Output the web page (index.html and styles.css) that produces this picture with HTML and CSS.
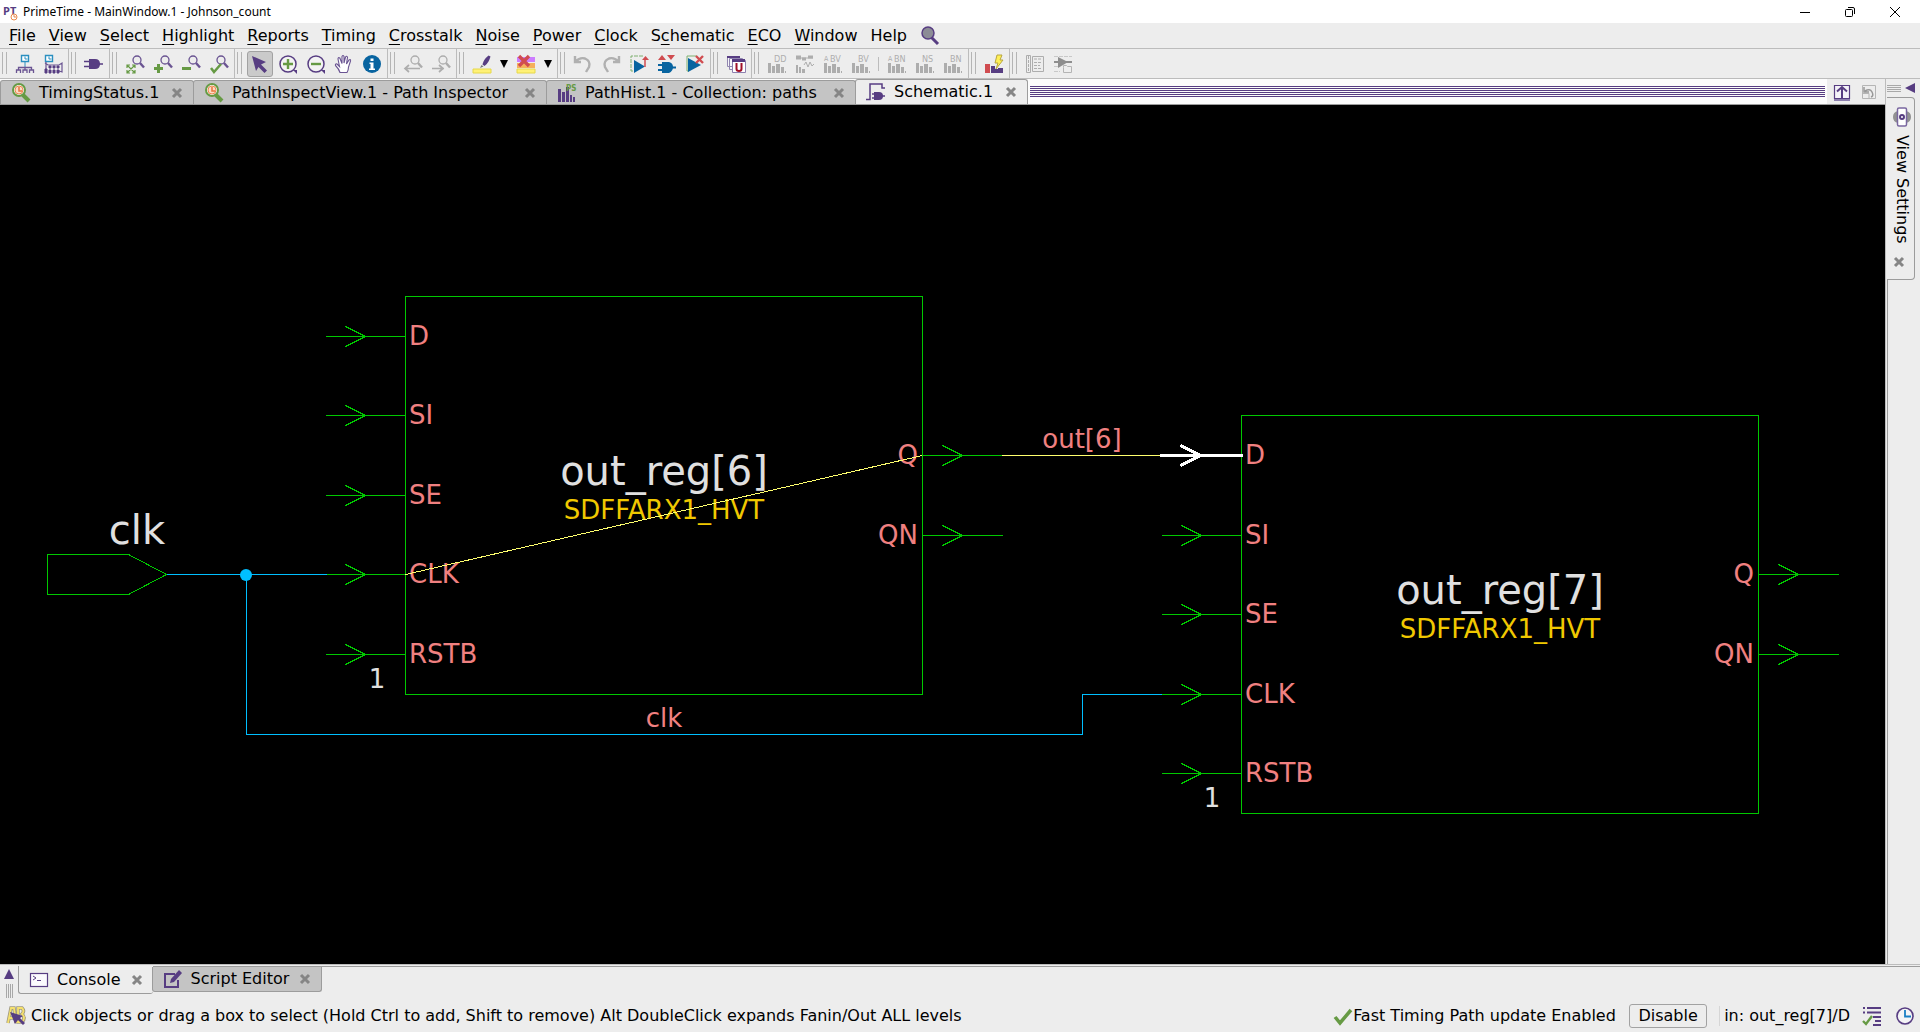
FILE: index.html
```html
<!DOCTYPE html>
<html lang="en">
<head>
<meta charset="utf-8">
<title>PrimeTime - MainWindow.1 - Johnson_count</title>
<link rel="stylesheet" href="styles.css">
</head>
<body>
<svg class="defs" aria-hidden="true">
  <defs>
    <symbol id="close" viewBox="0 0 12 12"><path d="M2 2l8 8M10 2l-8 8" stroke="#858585" stroke-width="3"/></symbol>
    <symbol id="lens" viewBox="0 0 20 20"><circle cx="12" cy="6" r="4" fill="none" stroke="currentColor" stroke-width="1.3"/><path d="M15 9l4 4.500" stroke="currentColor" stroke-width="2.400"/></symbol>
    <symbol id="bars" viewBox="0 0 20 20"><path d="M1 9h3v10H1zM5 12h3v7H5zM9 10h4v9H9zM14 13h3v6h-3zM18 17h1v2h-1z" fill="currentColor"/></symbol>
    <symbol id="timing" viewBox="0 0 20 20"><path d="M12 12l6 6" stroke="#669a44" stroke-width="4"/><circle cx="8" cy="7" r="6" fill="#fdfdfd" stroke="#669a44" stroke-width="2"/><circle cx="8" cy="7" r="4" fill="#fbdcc6" stroke="#ee8650" stroke-width="1"/><path d="M8 4v4h3" fill="none" stroke="#e8743c" stroke-width="1.500"/></symbol>
  </defs>
</svg>

<header class="titlebar">
  <svg class="logo" viewBox="0 0 16 16"><text x="0" y="11" class="logo-text">PT</text><circle cx="11" cy="13" r="3" fill="#fff" stroke="#e98a4e"/><path d="M11 11v2h2" fill="none" stroke="#e98a4e"/></svg>
  <h1>PrimeTime - MainWindow.1 - Johnson_count</h1>
  <div class="window-buttons">
    <button aria-label="Minimize"><svg viewBox="0 0 12 12"><path d="M1 6.500h10" stroke="#000"/></svg></button>
    <button aria-label="Restore"><svg viewBox="0 0 12 12"><rect x="1.500" y="3.500" width="7" height="7" rx="1" fill="none" stroke="#000"/><path d="M4 1.500h5q1.500 0 1.500 1.500v5" fill="none" stroke="#000"/></svg></button>
    <button aria-label="Close"><svg viewBox="0 0 12 12"><path d="M1 1l10 10M11 1L1 11" stroke="#000"/></svg></button>
  </div>
</header>

<nav class="menubar">
  <button><u>F</u>ile</button><button><u>V</u>iew</button><button><u>S</u>elect</button><button><u>H</u>ighlight</button><button><u>R</u>eports</button><button><u>T</u>iming</button><button><u>C</u>rosstalk</button><button><u>N</u>oise</button><button><u>P</u>ower</button><button><u>C</u>lock</button><button>S<u>c</u>hematic</button><button><u>E</u>CO</button><button><u>W</u>indow</button><button>Help</button>
  <button class="search" aria-label="Search"><svg class="icon" viewBox="0 0 20 20"><path d="M11 11l7 7" stroke="#573d82" stroke-width="3"/><circle cx="8" cy="7" r="6" fill="#8c8c96" stroke="#573d82" stroke-width="1.500"/></svg></button>
</nav>

<div class="toolbar">
  <div class="group">
    <button aria-label="Clock hierarchy"><svg class="icon" viewBox="0 0 20 20"><path d="M6.500 1.500h7v6h-7z" fill="#fff" stroke="#2a8fc0" stroke-width="1.400"/><path d="M10 2.500v2.500h2.500" fill="none" stroke="#2a8fc0"/><path d="M10 8v6" stroke="#2a8fc0"/><path d="M3.500 16v-2.500h13V16M10 13v3M1.500 19v-3h4v3M8 19v-3h4v3M14.500 19v-3h4v3" fill="none" stroke="#6a5492" stroke-width="1.300"/></svg></button>
    <button aria-label="Clock matrix"><svg class="icon" viewBox="0 0 20 20"><path d="M2.500 1.500h7v6h-7z" fill="#fff" stroke="#2a8fc0" stroke-width="1.400"/><path d="M6 2.500v2.500h2.500" fill="none" stroke="#2a8fc0"/><path d="M3 8v11M2 9l3 2h11l3-2v9l-3-1" fill="none" stroke="#6a5492" stroke-width="1.200"/><path d="M6 12h2v2H6zM10 12h2v2h-2zM14 12h2v2h-2zM6 16h2v3H6zM10 16h2v3h-2zM14 16h2v3h-2zM2 15h2v4H2z" fill="#573d82" stroke="#573d82"/></svg></button>
  </div>
  <div class="group">
    <button aria-label="Gate"><svg class="icon" viewBox="0 0 20 20"><path d="M5 5h6q5 0 5 5t-5 5H5z" fill="#573d82"/><path d="M0 7.500h6M0 12.500h6M15 10h4" stroke="#573d82" stroke-width="1.500"/></svg></button>
  </div>
  <div class="group purple">
    <button aria-label="Zoom fit"><svg class="icon" viewBox="0 0 20 20"><use href="#lens"/><path d="M2 14v-3h3M7 11h3v3M2 16v3h3M7 19h3v-3M2.500 11.500l7 7M9.500 11.500l-7 7" fill="none" stroke="#669a44" stroke-width="1.200"/></svg></button>
    <button aria-label="Zoom in"><svg class="icon" viewBox="0 0 20 20"><use href="#lens"/><path d="M1 14.500h9M5.500 10v9" stroke="#669a44" stroke-width="3"/></svg></button>
    <button aria-label="Zoom out"><svg class="icon" viewBox="0 0 20 20"><use href="#lens"/><path d="M1 14.500h9" stroke="#669a44" stroke-width="3"/></svg></button>
    <button aria-label="Zoom selection"><svg class="icon" viewBox="0 0 20 20"><use href="#lens"/><path d="M2 14l3 4l7-8" fill="none" stroke="#669a44" stroke-width="2.500"/></svg></button>
  </div>
  <div class="group purple">
    <button class="pressed" aria-label="Select tool"><svg class="icon" viewBox="0 0 20 20"><path d="M2 2l14 6l-5 2.500l6 6l-2.500 2.500l-6-6l-2.500 4z" fill="#573d82"/></svg></button>
    <button aria-label="Zoom in tool"><svg class="icon" viewBox="0 0 20 20"><circle cx="10" cy="10" r="8" fill="#f3f3f3" stroke="#573d82" stroke-width="1.500"/><path d="M15 16l4 4v-4z" fill="#573d82"/><path d="M5 10h10M10 5v10" stroke="#669a44" stroke-width="2.400"/></svg></button>
    <button aria-label="Zoom out tool"><svg class="icon" viewBox="0 0 20 20"><circle cx="10" cy="10" r="8" fill="#f3f3f3" stroke="#573d82" stroke-width="1.500"/><path d="M15 16l4 4v-4z" fill="#573d82"/><path d="M5 10h10" stroke="#669a44" stroke-width="2.400"/></svg></button>
    <button aria-label="Pan"><svg class="icon" viewBox="0 0 20 20"><path d="M6 18.500Q5 15 1.500 11.500Q1 9.500 3 10l2.500 2.500L4 5q0-2 1.800-1L8 9.500V2.500q1-2 2 0V9l1.500-6q1.300-1.500 2 .3L12.500 10l2.500-4q2-1 1.500 1L14.500 13q0 3-1.500 5.500z" fill="#fff" stroke="#6a5492" stroke-width="1.100"/></svg></button>
    <button aria-label="Info"><svg class="icon" viewBox="0 0 20 20"><circle cx="10" cy="10" r="9" fill="#0864a0"/><path d="M8.500 4.500h3v2.500h-3zM7.500 8.500h4v6h1.500v1.500H7v-1.500h1.500V10h-1z" fill="#fff"/></svg></button>
  </div>
  <div class="group muted">
    <button disabled aria-label="Zoom back"><svg class="icon" viewBox="0 0 20 20"><use href="#lens"/><path d="M17 14.500H2M6 11l-4 3.500L6 18" fill="none" stroke="currentColor" stroke-width="1.700"/></svg></button>
    <button disabled aria-label="Zoom forward"><svg class="icon" viewBox="0 0 20 20"><use href="#lens"/><path d="M1 14.500h12M8 11l4 3.500L8 18" fill="none" stroke="currentColor" stroke-width="1.700"/></svg></button>
  </div>
  <div class="group">
    <button aria-label="Highlight"><svg class="icon" viewBox="0 0 20 20"><path d="M1 15h18v4H1z" fill="#fff176" stroke="#e6d84a"/><path d="M16.500 1.500l2 1q-2 7-6 9.500l-2-1.500q1-5 6-9z" fill="#573d82"/><path d="M9.500 11l2 1.500l-3.500 1.500z" fill="#777"/></svg></button>
    <button class="caret" aria-label="Highlight colors"><svg viewBox="0 0 10 8"><path d="M1 0h8L5 8z"/></svg></button>
    <button aria-label="Clear highlight"><svg class="icon" viewBox="0 0 20 20"><path d="M1 3h18v5H1z" fill="#cc7dff"/><path d="M1 9h18v5H1z" fill="#f5b05c"/><path d="M1 15h18v4H1z" fill="#fff176" stroke="#e6d84a"/><path d="M3 2l10 10M13 2L3 12" stroke="#d04c50" stroke-width="3.400"/></svg></button>
    <button class="caret" aria-label="Clear options"><svg viewBox="0 0 10 8"><path d="M1 0h8L5 8z"/></svg></button>
  </div>
  <div class="group">
    <button disabled aria-label="Undo"><svg class="icon" viewBox="0 0 20 20"><path d="M2 2v6h6M2.500 7.500Q7 3 12 4.500Q18 7 16 13L13 18" fill="none" stroke="#b0b0b0" stroke-width="2.400"/></svg></button>
    <button disabled aria-label="Redo"><svg class="icon" viewBox="0 0 20 20"><path d="M18 2v6h-6M17.500 7.500Q13 3 8 4.500Q2 7 4 13L7 18" fill="none" stroke="#b0b0b0" stroke-width="2.400"/></svg></button>
    <button aria-label="Expand upward"><svg class="icon" viewBox="0 0 20 20"><path d="M4 17H2V2h12" fill="none" stroke="#7fb070" stroke-dasharray="4 1"/><path d="M5 6l11 6.500L5 19z" fill="#0864a0"/><path d="M16 13V5" stroke="#d04c50" stroke-width="1.500"/><path d="M13 6l3.500-4L20 6z" fill="#d04c50"/></svg></button>
    <button aria-label="Add to schematic"><svg class="icon" viewBox="0 0 20 20"><path d="M5 8h7q4 1 4 5t-4 6H5z" fill="#0864a0"/><path d="M1 11h5M1 16h5M15 13.500h4" stroke="#0864a0" stroke-width="2"/><path d="M1 6l4-5l4 5zM10 1h8l-4 5z" fill="#d04c50"/></svg></button>
    <button aria-label="Remove from schematic"><svg class="icon" viewBox="0 0 20 20"><path d="M4 17H2V2h10" fill="none" stroke="#7fb070"/><path d="M3 4l13 7L3 18z" fill="#0864a0"/><path d="M11 2l7 7M18 2l-7 7" stroke="#d04c50" stroke-width="2.400"/></svg></button>
  </div>
  <div class="group">
    <button aria-label="Cell tables"><svg class="icon" viewBox="0 0 20 20"><path d="M1.500 2.500h12v10h-12zM3.500 4.500h13v11h-13z" fill="#f7f7fa" stroke="#9186b0"/><path d="M1 2h13v2H1z" fill="#573d82"/><path d="M6.500 6.500h13v12h-13z" fill="#fff" stroke="#8c7fae"/><path d="M6 5h13v3H6z" fill="#573d82"/><path d="M10.500 9v6q0 2 2.500 2t2.500-2V9" fill="none" stroke="#a01028" stroke-width="2"/></svg></button>
  </div>
  <div class="group muted">
    <button disabled aria-label="Histogram DD"><svg class="icon" viewBox="0 0 20 20"><use href="#bars"/><text x="7" y="8">DD</text></svg></button>
    <button disabled aria-label="Waveform histogram"><svg class="icon" viewBox="0 0 20 20"><path d="M1 3h5M13 3h5M7 5h4M1 4h5" stroke="currentColor" stroke-width="3"/><path d="M6 4h12" stroke="currentColor"/><path d="M1 11h2v8H1zM4 13h2v6H4zM7 15h3v4H7z" fill="currentColor"/><path d="M9 11l2-3l2 5l2-5l2 4l2-2" fill="none" stroke="currentColor"/></svg></button>
    <button disabled aria-label="Histogram ABV"><svg class="icon" viewBox="0 0 20 20"><use href="#bars"/><text x="1" y="7" class="tiny">A</text><text x="7" y="8">BV</text></svg></button>
    <button disabled aria-label="Histogram BV"><svg class="icon" viewBox="0 0 20 20"><use href="#bars"/><text x="7" y="8">BV</text></svg></button>
    <span class="divider"></span>
    <button disabled aria-label="Histogram ABN"><svg class="icon" viewBox="0 0 20 20"><use href="#bars"/><text x="1" y="7" class="tiny">A</text><text x="7" y="8">BN</text></svg></button>
    <button disabled aria-label="Histogram NS"><svg class="icon" viewBox="0 0 20 20"><use href="#bars"/><text x="7" y="8">NS</text></svg></button>
    <button disabled aria-label="Histogram BN"><svg class="icon" viewBox="0 0 20 20"><use href="#bars"/><text x="7" y="8">BN</text></svg></button>
  </div>
  <div class="group">
    <button aria-label="Power histogram"><svg class="icon" viewBox="0 0 20 20"><path d="M1 10h5v9H1z" fill="#d04c50"/><path d="M7 12h4v7H7zM11 15h4v4h-4zM14 14h5v5h-5z" fill="#573d82"/><path d="M13 1h5l-2 5h3l-7 9l2-6h-3z" fill="#ffef55" stroke="#b8a640"/></svg></button>
  </div>
  <div class="group last muted">
    <button disabled aria-label="Properties"><svg class="icon" viewBox="0 0 20 20"><path d="M1.500 1.500h4v17h-4zM7.500 2.500h11v15h-11z" fill="none" stroke="currentColor"/><path d="M3.500 2v16M9 5h7M9 8.500h8M9 11.500h6M9 14.500h8" stroke="currentColor" stroke-dasharray="3 1"/></svg></button>
    <button disabled aria-label="Buffer report"><svg class="icon" viewBox="0 0 20 20"><path d="M1 2.500h18M1 12.500h6M1 17.500h6" stroke="#c8c8c8" stroke-dasharray="4 1"/><path d="M5 3l10 5l-10 6z" fill="#8e8e8e"/><path d="M1 8h18" stroke="#8e8e8e" stroke-width="2"/><path d="M10.500 13.500v-2h3l1 1h4v6h-8z" fill="#eee" stroke="#b4b4b4"/></svg></button>
  </div>
</div>

<main class="workspace">
  <section class="view">
    <div class="tabs">
      <div class="tab status-tab"><svg class="icon" viewBox="0 0 20 20"><use href="#timing"/></svg><button class="label">TimingStatus.1</button><button class="x" aria-label="Close TimingStatus.1"><svg><use href="#close"/></svg></button></div>
      <div class="tab inspector-tab"><svg class="icon" viewBox="0 0 20 20"><use href="#timing"/></svg><button class="label">PathInspectView.1 - Path Inspector</button><button class="x" aria-label="Close PathInspectView.1"><svg><use href="#close"/></svg></button></div>
      <div class="tab histogram-tab"><svg class="icon" viewBox="0 0 20 20"><path d="M1 6h3v13H1zM5 9h3v10H5zM9 4h3v15H9zM13 12h2v7h-2zM16 14h2v5h-2z" fill="#573d82"/><text x="9" y="8" class="green">PS</text></svg><button class="label">PathHist.1 - Collection: paths</button><button class="x" aria-label="Close PathHist.1"><svg><use href="#close"/></svg></button></div>
      <div class="tab active schematic-tab"><svg class="icon" viewBox="0 0 20 20"><path d="M0 17.500h4V2h12v4h3" fill="none" stroke="#573d82" stroke-width="1.500"/><path d="M8 10h5q4 0 4 4t-4 4H8z" fill="#573d82"/><path d="M6 12h3M6 16h3M16 14h3" stroke="#573d82" stroke-width="1.500"/></svg><button class="label">Schematic.1</button><button class="x" aria-label="Close Schematic.1"><svg><use href="#close"/></svg></button></div>
      <div class="grip"></div>
      <div class="tab-tools">
        <button aria-label="Undock"><svg class="icon" viewBox="0 0 20 20"><path d="M2.500 3.500h15v13h-15z" fill="#f4f2f8" stroke="#573d82" stroke-width="1.200"/><path d="M2 18h16" stroke="#8c7fae" stroke-width="2"/><path d="M10 16V5M5 9.500L10 5l5 4.500" fill="none" stroke="#573d82" stroke-width="2"/></svg></button>
        <button disabled aria-label="Restore view"><svg class="icon" viewBox="0 0 20 20"><path d="M3.500 3.500h13v13h-13zM3 11.500h7v5" fill="none" stroke="#b5b5b5"/><path d="M5 5v5h5M6 9q5-3 7 1t-1 5" fill="none" stroke="#989898" stroke-width="1.500"/></svg></button>
      </div>
    </div>
    <svg class="schematic" viewBox="0 105 1885 859" role="img" aria-label="Schematic of out_reg[6] and out_reg[7]">
      <g class="lines" transform="translate(.5 .5)">
        <rect x="405" y="296" width="517" height="398"/>
        <rect x="1241" y="415" width="517" height="398"/>
        <path d="M47 554h81l38 20l-38 20h-81z"/>
        <path id="in" d="M325 336h80M345 326l20 10l-20 10"/>
        <use href="#in" y="79"/><use href="#in" y="159"/><use href="#in" y="238"/><use href="#in" y="318"/>
        <path id="out" d="M922 455h80M942 445l20 10l-20 10"/>
        <use href="#out" y="80"/>
        <use href="#in" x="836" y="199"/><use href="#in" x="836" y="278"/><use href="#in" x="836" y="358"/><use href="#in" x="836" y="437"/>
        <use href="#out" x="836" y="119"/><use href="#out" x="836" y="199"/>
        <path class="clock" d="M166 574h160M246 574v160h836v-40h79"/>
        <path class="path" d="M1001 455h159"/>
        <path class="selected" d="M1159 455h83M1180 445l20 10l-20 10"/>
      </g>
      <circle cx="246" cy="575" r="6" class="junction"/>
      <g class="pins">
        <text x="409" y="345">D</text><text x="409" y="424">SI</text><text x="409" y="504">SE</text><text x="409" y="583">CLK</text><text x="409" y="663">RSTB</text>
        <text x="1245" y="464">D</text><text x="1245" y="544">SI</text><text x="1245" y="623">SE</text><text x="1245" y="703">CLK</text><text x="1245" y="782">RSTB</text>
        <text x="664" y="727" class="mid">clk</text><text x="1082" y="448" class="mid">out[6]</text>
        <text x="918" y="464" class="end">Q</text><text x="918" y="544" class="end">QN</text>
        <text x="1754" y="583" class="end">Q</text><text x="1754" y="663" class="end">QN</text>
      </g>
      <g class="cells">
        <text x="664" y="519">SDFFARX1_HVT</text><text x="1500" y="638">SDFFARX1_HVT</text>
      </g>
      <g class="values"><text x="377" y="688">1</text><text x="1212" y="807">1</text></g>
      <g class="names">
        <text x="664" y="485">out_reg[6]</text><text x="1500" y="604">out_reg[7]</text><text x="137" y="544">clk</text>
      </g>
      <path class="arc" d="M405.500 574.500L922.500 455.500"/>
    </svg>
  </section>
  <aside class="side">
    <div class="side-head"><span class="side-grip"></span><button aria-label="Expand panel"><svg viewBox="0 0 10 10"><path d="M10 0v10L0 5z"/></svg></button></div>
    <div class="side-tab">
      <svg class="icon" viewBox="0 0 20 20"><path d="M6 4Q1 5 1 10t5 6zM14 4q5 1 5 6t-5 6z" fill="#929292"/><rect x="5.500" y="1" width="9" height="18" rx="1.500" fill="#fff" stroke="#7a67a0" stroke-width="1.500"/><circle cx="10" cy="10" r="2" fill="#fff" stroke="#573d82" stroke-width="2"/></svg>
      <button class="label">View Settings</button>
      <button class="x" aria-label="Close View Settings"><svg><use href="#close"/></svg></button>
    </div>
    <div class="side-body"></div>
  </aside>
</main>

<section class="dock">
  <div class="dock-head"><button aria-label="Raise panel"><svg viewBox="0 0 10 10"><path d="M0 10h10L5 0z"/></svg></button><span class="dock-grip"></span></div>
  <div class="dock-tabs">
    <div class="tab active"><svg class="icon" viewBox="0 0 20 20"><rect x="1.500" y="3.500" width="17" height="13" fill="#fbfafd" stroke="#573d82" stroke-width="1.200"/><path d="M4 6l3 2l-3 2M8 10.500h4" fill="none" stroke="#573d82"/></svg><button class="label">Console</button><button class="x" aria-label="Close Console"><svg><use href="#close"/></svg></button></div>
    <div class="tab"><svg class="icon" viewBox="0 0 20 20"><path d="M12 5H2v13h13v-7" fill="none" stroke="#573d82" stroke-width="2"/><path d="M7 14l1-4l8-9l3 3l-8 9z" fill="#573d82"/></svg><button class="label">Script Editor</button><button class="x" aria-label="Close Script Editor"><svg><use href="#close"/></svg></button></div>
  </div>
</section>

<footer class="status">
  <svg class="icon" viewBox="0 0 20 20"><path d="M2 17L5 2h3l2 15M3 12h5M12 16V2h4q3 3 0 6q4 4 0 8z" fill="none" stroke="#a09a80" stroke-width="3.500"/><path d="M2 17L5 2h3l2 15M3 12h5M12 16V2h4q3 3 0 6q4 4 0 8z" fill="none" stroke="#f5e06e" stroke-width="1.800"/><path d="M4 6l13 4l-3 2l5 5l-2 2l-5-5l-3 4z" fill="#573d82"/></svg>
  <p class="hint">Click objects or drag a box to select (Hold Ctrl to add, Shift to remove) Alt DoubleClick expands Fanin/Out ALL levels</p>
  <svg class="icon" viewBox="0 0 20 20"><path d="M2 11l5 6L18 4" fill="none" stroke="#669a44" stroke-width="3.500"/></svg>
  <span class="update">Fast Timing Path update Enabled</span>
  <button class="disable">Disable</button>
  <span class="selection">in: out_reg[7]/D</span>
  <button class="tool" aria-label="Selection list"><svg class="icon" viewBox="0 0 20 20"><path d="M1 2h2M5 2h14M1 6.500h2M5 6.500h14M11 11h8M13 15h6M11 19h8" stroke="#573d82" stroke-width="1.800"/><path d="M1 15l3 3l6-8" fill="none" stroke="#669a44" stroke-width="2.400"/></svg></button>
  <button class="tool" aria-label="History"><svg class="icon" viewBox="0 0 20 20"><circle cx="10" cy="10" r="8" fill="#f4f4f6" stroke="#573d82" stroke-width="1.600"/><path d="M10 4v6.500h6" fill="none" stroke="#1b7fc4" stroke-width="1.800"/></svg></button>
</footer>
</body>
</html>
```
FILE: styles.css
```css
* { box-sizing: border-box; }
body {
  margin: 0;
  min-height: 100vh;
  display: flex;
  flex-direction: column;
  background: #ededed;
  color: #000;
  font: 16px/20px "DejaVu Sans", sans-serif;
}
button { font: inherit; color: inherit; background: none; border: 0; padding: 0; margin: 0; display: flex; align-items: center; justify-content: center; white-space: nowrap; }
svg { display: block; flex: none; }
.defs { position: absolute; width: 0; height: 0; }
.icon { width: 20px; height: 20px; overflow: visible; }
.icon text { font: 9px "DejaVu Sans Condensed", "DejaVu Sans", sans-serif; fill: currentColor; }
.icon .tiny { font-size: 7px; }
.icon .green { fill: #669a44; font-weight: bold; font-size: 8px; }
.purple { color: #6a5492; }
.muted { color: #adadad; }

.titlebar { height: 23px; background: #fff; display: flex; align-items: center; gap: 4px; padding: 0 3px; }
.logo { width: 16px; height: 16px; overflow: visible; }
.logo-text { font: bold 11px/12px "Open Sans", sans-serif; fill: #573d82; }
.titlebar h1 { margin: 0; flex: 1; font: 12px/20px "Noto Sans", sans-serif; }
.window-buttons { display: flex; }
.window-buttons button { width: 45px; height: 22px; }
.window-buttons svg { width: 12px; height: 12px; }

.menubar { height: 26px; display: flex; align-items: center; padding-left: 3px; border-bottom: 1px solid #bcbcbc; }
.menubar button { padding: 0 7px 0 6px; height: 25px; display: block; line-height: 25px; }
.menubar u { text-decoration-thickness: 1px; text-underline-offset: 3px; text-decoration-skip-ink: none; }
.menubar .search { display: flex; }

.toolbar { height: 30px; display: flex; border-bottom: 1px solid #bcbcbc; }
.group { position: relative; display: flex; align-items: center; padding: 0 1px 0 11px; border-right: 1px solid #bcbcbc; }
.group::before { content: ""; position: absolute; left: 2px; top: 3px; bottom: 4px; width: 3px; border: solid #b4b4b4; border-width: 0 1px; }
.group.last { border-right: 0; }
.group button { width: 28px; height: 26px; }
.group .pressed { width: 26px; margin: 0 1px; border: 1px solid #a2a2a2; border-radius: 3px; background: #cacaca; }
.group .caret { width: 16px; }
.caret svg { width: 10px; height: 8px; }
.divider { width: 1px; height: 14px; margin: 0 4px 0 3px; background: #bcbcbc; }

.workspace { flex: 1; display: flex; min-height: 0; }
.view { flex: 1; display: flex; flex-direction: column; min-width: 0; border-right: 1px solid #bcbcbc; }
.tabs { height: 26px; display: flex; align-items: flex-end; border-bottom: 1px solid #9c9c9c; background: #fcfcfc; }
.tab { display: flex; align-items: center; height: 25px; padding: 0 10px; background: #c4c4c4; border: 1px solid #9c9c9c; border-radius: 3px 3px 0 0; margin-right: -1px; }
.tabs .tab { border-bottom: 0; height: 24px; }
.tabs .tab.active { height: 25px; background: #ededed; }
.tab .label { margin: 0 10px 0 8px; flex: 1; justify-content: flex-start; }
.status-tab { width: 194px; }
.inspector-tab { width: 354px; }
.histogram-tab { width: 310px; }
.schematic-tab { width: 173px; }
.x svg { width: 12px; height: 12px; }
.grip { flex: 1; height: 11px; margin: 0 2px 7px 3px; background: repeating-linear-gradient(#573d82 0 1px, #fcfcfc 1px 2px); }
.tab-tools { align-self: stretch; width: 58px; display: flex; align-items: center; gap: 7px; padding-left: 5px; background: #ededed; }
.schematic { width: 100%; flex: 1; min-height: 0; background: #000; font-size: 26px; }
.lines { fill: none; stroke: #00c800; shape-rendering: crispEdges; }
.lines .clock { stroke: #00bfff; }
.lines .path { stroke: #ffff6e; }
.lines .selected { stroke: #fff; stroke-width: 3px; }
.junction { fill: #00bfff; }
.arc { stroke: #ffff6e; fill: none; shape-rendering: crispEdges; }
.pins { fill: #f08080; }
.mid { text-anchor: middle; }
.end { text-anchor: end; }
.cells { fill: #f0c800; text-anchor: middle; }
.values { fill: #e0e0e0; text-anchor: middle; }
.names { fill: #e0e0e0; text-anchor: middle; font-size: 40px; }

.side { width: 34px; display: flex; flex-direction: column; }
.side-head { height: 18px; display: flex; align-items: center; gap: 4px; padding-left: 1px; }
.side-grip { width: 14px; height: 7px; background: repeating-linear-gradient(#a8a8a8 0 1px, #ededed 1px 2px); }
.side-head svg, .dock-head svg { width: 10px; height: 10px; fill: #573d82; }
.side-tab { width: 28px; height: 183px; margin-left: 1px; display: flex; flex-direction: column; align-items: center; padding: 9px 0 0 2px; border: 1px solid #9c9c9c; border-left: 0; border-radius: 0 4px 4px 0; }
.side-tab .label { writing-mode: vertical-rl; margin: 8px 0 12px; }
.side-tab .x { margin-right: 6px; }
.side-body { flex: 1; margin-left: 1px; border-left: 1px solid #9c9c9c; }

.dock { height: 34px; display: flex; border-top: 1px solid #bcbcbc; padding-top: 1px; }
.dock-head { width: 18px; display: flex; flex-direction: column; align-items: center; gap: 5px; padding-top: 3px; }
.dock-grip { width: 7px; height: 14px; background: repeating-linear-gradient(90deg, #a8a8a8 0 1px, #ededed 1px 2px); }
.dock-tabs { flex: 1; display: flex; align-items: flex-start; border-top: 1px solid #9c9c9c; }
.dock-tabs .tab { border-radius: 0 0 3px 3px; border-top: 0; }
.dock-tabs .active { height: 28px; margin-top: -1px; background: #ededed; border-right: 0; }

.status { height: 34px; display: flex; align-items: center; padding: 1px 5px 0 6px; white-space: nowrap; }
.status .hint { flex: 1; margin: 0 0 0 5px; }
.update { min-width: 270px; }
.disable { height: 24px; width: 78px; margin: 0 12px 0 6px; border: 1px solid #a2a2a2; border-radius: 3px; }
.selection { padding-left: 4px; margin-right: 12px; border-left: 1px solid #d6d6d6; }
.status .tool + .tool { margin-left: 13px; }
```
